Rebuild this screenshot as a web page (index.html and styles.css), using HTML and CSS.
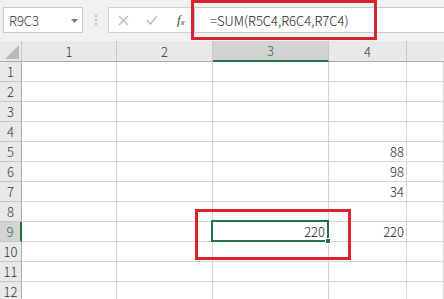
FILE: index.html
```html
<!DOCTYPE html>
<html lang="ja">
<head>
<meta charset="utf-8">
<link rel="stylesheet" href="styles.css">
</head>
<body>
<div class="app">
  <div class="toolbar">
    <div class="namebox">
      <span class="name">R9C3</span>
      <svg class="caret" width="7" height="4" viewBox="0 0 7 4"><path d="M0 0H7L3.5 4Z" fill="#777"/></svg>
    </div>
    <div class="dots"><i></i><i></i><i></i></div>
    <div class="fxbox">
      <svg class="btn" width="11" height="11" viewBox="0 0 11 11"><path d="M1 1L10 10M10 1L1 10" stroke="#b8b8b8" stroke-width="1.2" fill="none"/></svg>
      <svg class="btn" width="12" height="10" viewBox="0 0 12 10"><path d="M1 5.5L4.5 9L11 1" stroke="#b8b8b8" stroke-width="1.2" fill="none"/></svg>
      <span class="fx">f<sub>x</sub></span>
    </div>
    <div class="formula">=SUM(R5C4,R6C4,R7C4)</div>
  </div>
  <div class="sheet">
    <div class="corner"><span class="tri"></span></div>
    <div class="ch">1</div>
    <div class="ch">2</div>
    <div class="ch sel">3</div>
    <div class="ch">4</div>
    <div class="ch last"></div>

    <div class="rh">1</div><div class="c"></div><div class="c"></div><div class="c"></div><div class="c"></div><div class="c"></div>
    <div class="rh">2</div><div class="c"></div><div class="c"></div><div class="c"></div><div class="c"></div><div class="c"></div>
    <div class="rh">3</div><div class="c"></div><div class="c"></div><div class="c"></div><div class="c"></div><div class="c"></div>
    <div class="rh">4</div><div class="c"></div><div class="c"></div><div class="c"></div><div class="c"></div><div class="c"></div>
    <div class="rh">5</div><div class="c"></div><div class="c"></div><div class="c"></div><div class="c num">88</div><div class="c"></div>
    <div class="rh">6</div><div class="c"></div><div class="c"></div><div class="c"></div><div class="c num">98</div><div class="c"></div>
    <div class="rh">7</div><div class="c"></div><div class="c"></div><div class="c"></div><div class="c num">34</div><div class="c"></div>
    <div class="rh">8</div><div class="c"></div><div class="c"></div><div class="c"></div><div class="c"></div><div class="c"></div>
    <div class="rh sel">9</div><div class="c"></div><div class="c"></div><div class="c num active">220<span class="cursor"><span class="handle"></span></span></div><div class="c num">220</div><div class="c"></div>
    <div class="rh">10</div><div class="c"></div><div class="c"></div><div class="c"></div><div class="c"></div><div class="c"></div>
    <div class="rh">11</div><div class="c"></div><div class="c"></div><div class="c"></div><div class="c"></div><div class="c"></div>
    <div class="rh">12</div><div class="c"></div><div class="c"></div><div class="c"></div><div class="c"></div><div class="c"></div>
  </div>
  <div class="mark mark-formula"></div>
  <div class="mark mark-cell"></div>
</div>
</body>
</html>
```
FILE: styles.css
```css
* { box-sizing: border-box; }
html, body { margin: 0; padding: 0; }
body {
  width: 444px;
  height: 299px;
  overflow: hidden;
  background: #fff;
  font-family: "Noto Sans CJK JP", "Liberation Sans", sans-serif;
  font-weight: 300;
  color: #222;
}
.app { position: relative; width: 444px; height: 299px; overflow: hidden; }

.toolbar {
  height: 41px;
  background: #f1f1f1;
  display: flex;
  align-items: flex-start;
  padding: 7px 0 0 3px;
}
.namebox {
  width: 80px;
  height: 26px;
  background: #fff;
  border: 1px solid #c8c8c8;
  display: flex;
  align-items: center;
  justify-content: space-between;
  padding: 0 4px 0 5px;
  font-size: 13px;
  line-height: 1;
  color: #333;
}
.namebox .caret { margin-top: 1px; }
.dots {
  width: 25px;
  height: 26px;
  display: flex;
  flex-direction: column;
  align-items: center;
  justify-content: center;
  gap: 2px;
}
.dots i { display: block; width: 2px; height: 2px; background: #c2c2c2; }
.fxbox {
  width: 86px;
  height: 26px;
  background: #fff;
  border: 1px solid #d0d0d0;
  border-right: none;
  display: flex;
  align-items: center;
  padding-left: 9px;
}
.fxbox .btn:first-child { margin-right: 17px; }
.fxbox .btn:nth-child(2) { margin-right: 19px; }
.fx {
  font-family: "Liberation Serif", serif;
  font-style: italic;
  font-weight: 400;
  font-size: 13px;
  color: #444;
  line-height: 1;
}
.fx sub { font-size: 9px; vertical-align: -1px; }
.formula {
  flex: 1;
  height: 26px;
  background: #fff;
  border: 1px solid #c8c8c8;
  border-right: none;
  display: flex;
  align-items: center;
  padding-left: 15px;
  font-size: 13px;
  color: #222;
  line-height: 1;
}

.sheet {
  display: grid;
  grid-template-columns: 22px 95px 96px 116px 78px 1fr;
  grid-template-rows: 21px repeat(11, 20px) 18px;
  font-size: 13px;
  line-height: 1;
}
.corner {
  position: relative;
  background: #e9e9e9;
  border-right: 1px solid #c6c6c6;
  border-bottom: 1px solid #ababab;
}
.tri {
  position: absolute;
  right: 2px;
  bottom: 2px;
  width: 0;
  height: 0;
  border-left: 14px solid transparent;
  border-bottom: 14px solid #b9b9b9;
}
.ch {
  background: #e9e9e9;
  border-right: 1px solid #c6c6c6;
  border-bottom: 1px solid #ababab;
  display: flex;
  align-items: center;
  justify-content: center;
  color: #333;
}
.ch.last { border-right: none; }
.ch.sel {
  background: #d3d3d3;
  color: #217346;
  border-bottom: 2px solid #217346;
}
.rh {
  background: #e9e9e9;
  border-right: 1px solid #ababab;
  border-bottom: 1px solid #c6c6c6;
  display: flex;
  align-items: center;
  justify-content: center;
  color: #333;
}
.sheet > :nth-last-child(-n+6) { border-bottom: none; align-items: flex-start; padding-top: 3px; }
.rh.sel {
  background: #d3d3d3;
  color: #217346;
  border-right: 2px solid #217346;
}
.c {
  border-right: 1px solid #d4d4d4;
  border-bottom: 1px solid #d4d4d4;
  display: flex;
  align-items: center;
  justify-content: flex-end;
  padding-right: 2px;
  color: #222;
}
.c.active { position: relative; padding-right: 3px; }
.cursor {
  position: absolute;
  left: -2px;
  top: -2px;
  right: -1px;
  bottom: -1px;
  border: 2px solid #217346;
}
.handle {
  position: absolute;
  right: -4px;
  bottom: -4px;
  width: 6px;
  height: 6px;
  background: #217346;
  border: 1px solid #fff;
}

.mark {
  position: absolute;
  border: 3px solid #d9232d;
}
.mark-formula { left: 191px; top: 0; width: 186px; height: 40px; }
.mark-cell { left: 195px; top: 209px; width: 156px; height: 51px; }
```
